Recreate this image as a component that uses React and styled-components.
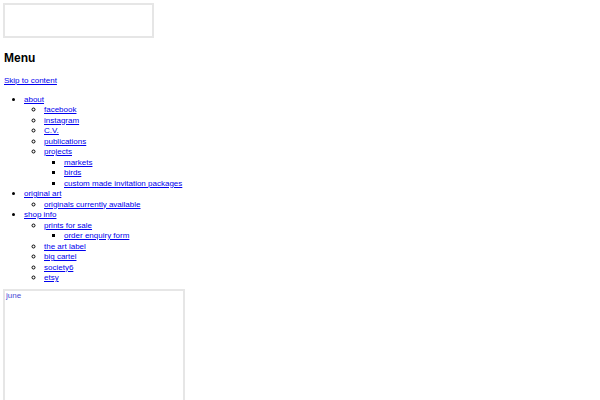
import styled, { createGlobalStyle } from 'styled-components'

const GlobalStyle = createGlobalStyle`
  body {
    margin: 3px;
    font-family: "Liberation Sans", Arial, sans-serif;
    font-size: 8px;
    line-height: 10.5px;
    color: #000;
    background: #fff;
  }
  a {
    color: #0000ee;
  }
`

const s = {
  LogoFrame: styled.div`
    width: 147px;
    height: 31px;
    border: 2px solid #e6e6e6;
  `,
  MenuTitle: styled.h2`
    margin: 13px 0 11px 1px;
    font-size: 12px;
    line-height: 14px;
    font-weight: 700;
  `,
  SkipLink: styled.a`
    display: block;
    margin-left: 1px;
  `,
  NavList: styled.ul`
    margin: ${(p) => (p.$top ? '7px 0 0 1px' : '0')};
    padding-left: 20px;
    list-style-type: ${(p) => p.$marker};
  `,
  Item: styled.li`
    font-size: 9px;
    line-height: 10.5px;
  `,
  NavLink: styled.a`
    font-size: 8px;
    line-height: 9px;
  `,
  Feed: styled.div`
    margin-top: 6px;
    width: 176px;
    height: 140px;
    border: 2px solid #e6e6e6;
    padding: 0 1px;
  `,
  FeedLink: styled.a`
    color: #4a4ad6;
    text-decoration: none;
  `,
}

const menu = [
  {
    label: 'about',
    children: [
      { label: 'facebook' },
      { label: 'instagram' },
      { label: 'C.V.' },
      { label: 'publications' },
      {
        label: 'projects',
        children: [
          { label: 'markets' },
          { label: 'birds' },
          { label: 'custom made invitation packages' },
        ],
      },
    ],
  },
  {
    label: 'original art',
    children: [{ label: 'originals currently available' }],
  },
  {
    label: 'shop info',
    children: [
      { label: 'prints for sale', children: [{ label: 'order enquiry form' }] },
      { label: 'the art label' },
      { label: 'big cartel' },
      { label: 'society6' },
      { label: 'etsy' },
    ],
  },
]

const markers = ['disc', 'circle', 'square']

const Tree = ({ items, depth = 0 }) => (
  <s.NavList $marker={markers[depth]} $top={depth === 0}>
    {items.map((item) => (
      <s.Item key={item.label}>
        <s.NavLink href="#">{item.label}</s.NavLink>
        {item.children && <Tree items={item.children} depth={depth + 1} />}
      </s.Item>
    ))}
  </s.NavList>
)

const App = () => {
  return (
    <>
      <GlobalStyle />
      <s.LogoFrame />
      <s.MenuTitle>Menu</s.MenuTitle>
      <s.SkipLink href="#">Skip to content</s.SkipLink>
      <Tree items={menu} />
      <s.Feed>
        <s.FeedLink href="#">june</s.FeedLink>
      </s.Feed>
    </>
  )
}

export default App
